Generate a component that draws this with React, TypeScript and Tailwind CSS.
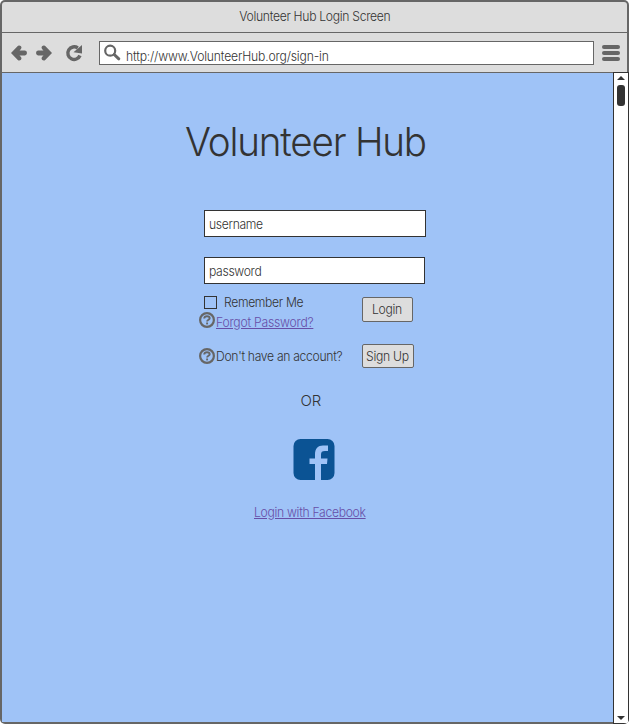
import type { ReactNode } from "react";

function HelpIcon() {
  return (
    <svg width="16" height="16" viewBox="0 0 16 16" fill="none" stroke="#666" className="block shrink-0">
      <circle cx="8" cy="8" r="6.9" strokeWidth="2.2" />
      <path d="M5.2 6.5C5.3 4.9 6.500 4.300 8 4.300c1.600 0 2.700.700 2.700 2C10.700 7.800 8.100 7.800 8.100 9.600" strokeWidth="1.900" />
      <path d="M8.100 10.500v1.900" strokeWidth="1.900" />
    </svg>
  );
}

function ArrowIcon({ flip = false }: { flip?: boolean }) {
  return (
    <svg width="16" height="16" viewBox="0 0 16 16" className={flip ? "block -scale-x-100" : "block"}>
      <path
        d="M0 8 7 .800Q8.500 0 10 1.300 11 2.600 10 4L8.500 5.600H14Q16 6 16 8T14 10.400H8.500L10 12Q11 13.400 10 14.700 8.500 16 7 15.200Z"
        fill="#666"
      />
    </svg>
  );
}

// Inter set slightly condensed
function Text({ className = "", children }: { className?: string; children: ReactNode }) {
  return (
    <span className={`block w-max origin-left scale-x-[.935] whitespace-nowrap ${className}`}>{children}</span>
  );
}

function Button({ className, children }: { className: string; children: ReactNode }) {
  return (
    <button className={`block rounded-[2px] border border-[#666] bg-[#ddd] text-left whitespace-nowrap ${className}`}>
      <Text className="tracking-[-0.3px]">{children}</Text>
    </button>
  );
}

export default function App() {
  return (
    <div className="flex h-[724px] w-[629px] flex-col overflow-hidden rounded-[5px] bg-[#666] pt-[2px] pl-[2px] font-['Inter','Liberation_Sans',sans-serif] text-[13px] leading-4 font-[340] text-[#333]">
      <header className="mr-[2px] flex h-[31px] shrink-0 justify-center rounded-t-[3px] border-b border-[#666] bg-[#ddd] pt-[6px]">
        <span className="block scale-x-[.935] tracking-[-0.32px]">Volunteer Hub Login Screen</span>
      </header>
      <nav className="mr-[2px] flex h-[39px] shrink-0 items-start bg-[#ddd] pl-[9px]">
        <div className="mt-[12px] flex gap-[9px]">
          <ArrowIcon />
          <ArrowIcon flip />
        </div>
        <svg width="18" height="18" viewBox="0 0 18 18" className="mt-[11px] ml-[13px] block">
          <path d="M15 11.500A6.300 6.300 0 1 1 12.800 4" fill="none" stroke="#666" strokeWidth="3.400" />
          <path d="M17 1v8.500L8.500 8.300z" fill="#666" />
        </svg>
        <div className="mt-[8px] ml-[16px] flex h-[24px] w-[495px] border border-[#666] bg-white pl-[4px]">
          <svg width="17" height="17" viewBox="0 0 17 17" className="mt-[2px] block" fill="none" stroke="#666">
            <circle cx="6.200" cy="6.700" r="5" strokeWidth="2.200" />
            <path d="m10.200 10.500 4.600 4.300" strokeWidth="3" strokeLinecap="round" />
          </svg>
          <Text className="mt-[6px] ml-[5px] tracking-[-0.18px]">http://www.VolunteerHub.org/sign-in</Text>
        </div>
        <div className="mt-[12px] ml-[8px] flex flex-col gap-[2px]">
          <i className="h-[4px] w-[18px] rounded-full bg-[#666]" />
          <i className="h-[4px] w-[18px] rounded-full bg-[#666]" />
          <i className="h-[4px] w-[18px] rounded-full bg-[#666]" />
        </div>
      </nav>
      <div className="flex h-[652px] shrink-0">
        <main className="mt-px mb-[2px] flex w-[611px] flex-col bg-[#9fc3f7]">
          <h1 className="mt-[45px] ml-[183px] h-[48px] text-[40px] leading-[48px] font-[350]">
            <span className="block w-max origin-left scale-x-[.965] whitespace-nowrap tracking-[-1.25px]">Volunteer Hub</span>
          </h1>
          <div className="mt-[44px] ml-[202px] h-[27px] w-[222px] border border-[#333] bg-white pt-[5px] pl-[4px]">
            <Text className="tracking-[-0.35px]">username</Text>
          </div>
          <div className="mt-[20px] ml-[202px] h-[27px] w-[221px] border border-[#333] bg-white pt-[5px] pl-[4px]">
            <Text className="tracking-[-0.35px]">password</Text>
          </div>
          <div className="mt-[10px] ml-[197px] flex h-[36px] items-start">
            <div className="w-[163px]">
              <div className="flex h-[18px] items-start pl-[5px]">
                <span className="mt-[2px] h-[13px] w-[13px] border border-[#333]" />
                <Text className="ml-[6.5px] tracking-[-0.37px]">Remember Me</Text>
              </div>
              <div className="flex">
                <HelpIcon />
                <Text className="mt-[2px] ml-px text-[#674ea7] underline tracking-[-0.24px]">Forgot Password?</Text>
              </div>
            </div>
            <Button className="mt-[3px] h-[25px] w-[51px] pb-[2px] pl-[8.5px]">Login</Button>
          </div>
          <div className="mt-[14px] ml-[197px] flex h-[24px] items-start">
            <div className="flex w-[163px] pt-[4px]">
              <HelpIcon />
              <Text className="ml-[.5px] tracking-[-0.33px]">Don't have an account?</Text>
            </div>
            <Button className="h-[24px] w-[52px] pl-[3px]">Sign Up</Button>
          </div>
          <p className="mt-[23px] ml-[298.5px] h-[20px] text-[15px] leading-5 tracking-[-0.2px]">OR</p>
          <svg width="42" height="42" viewBox="0 0 42 42" className="mt-[28px] ml-[291px] block">
            <rect x=".5" y="0" width="41" height="41" rx="7" fill="#0b5394" />
            <path d="M22 41V25h-5.500v-5.500H22v-4C22 9.500 25 6.500 30 6.500h5V12h-3c-3 0-4 1-4 3.500v4h6.500L34 25h-6v16z" fill="#9fc3f7" />
          </svg>
          <Text className="mt-[23px] ml-[252px] text-[#674ea7] underline tracking-[-0.32px]">Login with Facebook</Text>
        </main>
        <aside className="flex h-[652px] w-[16px] flex-col items-center border border-[#333] bg-white">
          <svg width="8" height="4" viewBox="0 0 8 4" className="mt-[3px] block"><path d="M0 4 4 0l4 4z" fill="#333" /></svg>
          <div className="mt-[5px] h-[21px] w-[8px] rounded-[3px] bg-[#333]" />
          <svg width="8" height="4" viewBox="0 0 8 4" className="mt-auto mb-[3px] block"><path d="m0 0 4 4 4-4z" fill="#333" /></svg>
        </aside>
      </div>
    </div>
  );
}
